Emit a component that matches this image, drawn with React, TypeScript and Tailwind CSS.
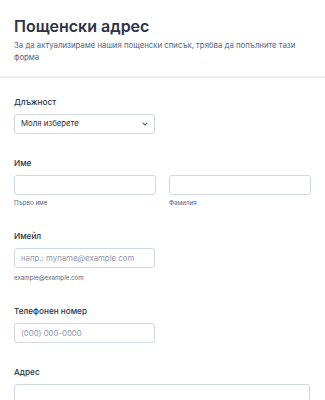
const Label = ({ children }: { children: React.ReactNode }) => (
    <label className="block text-[8.2px] font-medium text-[#2c3345] leading-[12px] mb-[6px]">{children}</label>
);

const Input = ({ placeholder, className = '' }: { placeholder?: string; className?: string }) => (
    <input
        placeholder={placeholder}
        className={`block h-[20px] border border-[#d3d7e0] rounded-[3px] px-[6px] text-[7.8px] text-[#2c3345] placeholder:text-[#8f96a8] outline-none bg-white ${className}`}
    />
);

const SubLabel = ({ children, className = '' }: { children: React.ReactNode; className?: string }) => (
    <span className={`block text-[6.2px] leading-[8px] text-[#57647e] ${className}`}>{children}</span>
);

export default function App() {
    return (
        <div className="w-[325px] h-[400px] overflow-hidden bg-white" style={{ fontFamily: 'Inter, "Noto Sans", sans-serif' }}>
            {/* Header */}
            <div className="px-[14px] pt-[16px] pb-[13px] border-b-2 border-[#eceef1]">
                <h1 className="text-[16px] leading-[20px] font-semibold text-[#2c3345]">Пощенски адрес</h1>
                <p className="text-[7.8px] leading-[12px] text-[#57647e] mt-[3px]">
                    За да актуализираме нашия пощенски списък, трябва да попълните тази форма
                </p>
            </div>

            <div className="px-[14px] pt-[18px] flex flex-col gap-[23px]">
                {/* Position */}
                <div>
                    <Label>Длъжност</Label>
                    <div className="w-[141px] h-[20px] border border-[#d3d7e0] rounded-[3px] flex items-center justify-between pl-[6px] pr-[5px]">
                        <span className="text-[7.8px] text-[#2c3345]">Моля изберете</span>
                        <svg width="6" height="4" viewBox="0 0 6 4" className="mr-[1px]">
                            <path d="M0.8 0.8 L3 3 L5.2 0.8" fill="none" stroke="#57647e" strokeWidth="1.1" />
                        </svg>
                    </div>
                </div>

                {/* Name */}
                <div>
                    <Label>Име</Label>
                    <div className="flex gap-[13px]">
                        <div>
                            <Input className="w-[142px]" />
                            <SubLabel className="mt-[4px]">Първо име</SubLabel>
                        </div>
                        <div>
                            <Input className="w-[142px]" />
                            <SubLabel className="mt-[4px]">Фамилия</SubLabel>
                        </div>
                    </div>
                </div>

                {/* Email */}
                <div>
                    <Label>Имейл</Label>
                    <Input className="w-[141px]" placeholder="напр.: myname@example.com" />
                    <SubLabel className="mt-[6px]">example@example.com</SubLabel>
                </div>

                {/* Phone */}
                <div>
                    <Label>Телефонен номер</Label>
                    <Input className="w-[141px]" placeholder="(000) 000-0000" />
                </div>

                {/* Address */}
                <div>
                    <Label>Адрес</Label>
                    <Input className="w-[296px]" />
                </div>
            </div>
        </div>
    );
}
